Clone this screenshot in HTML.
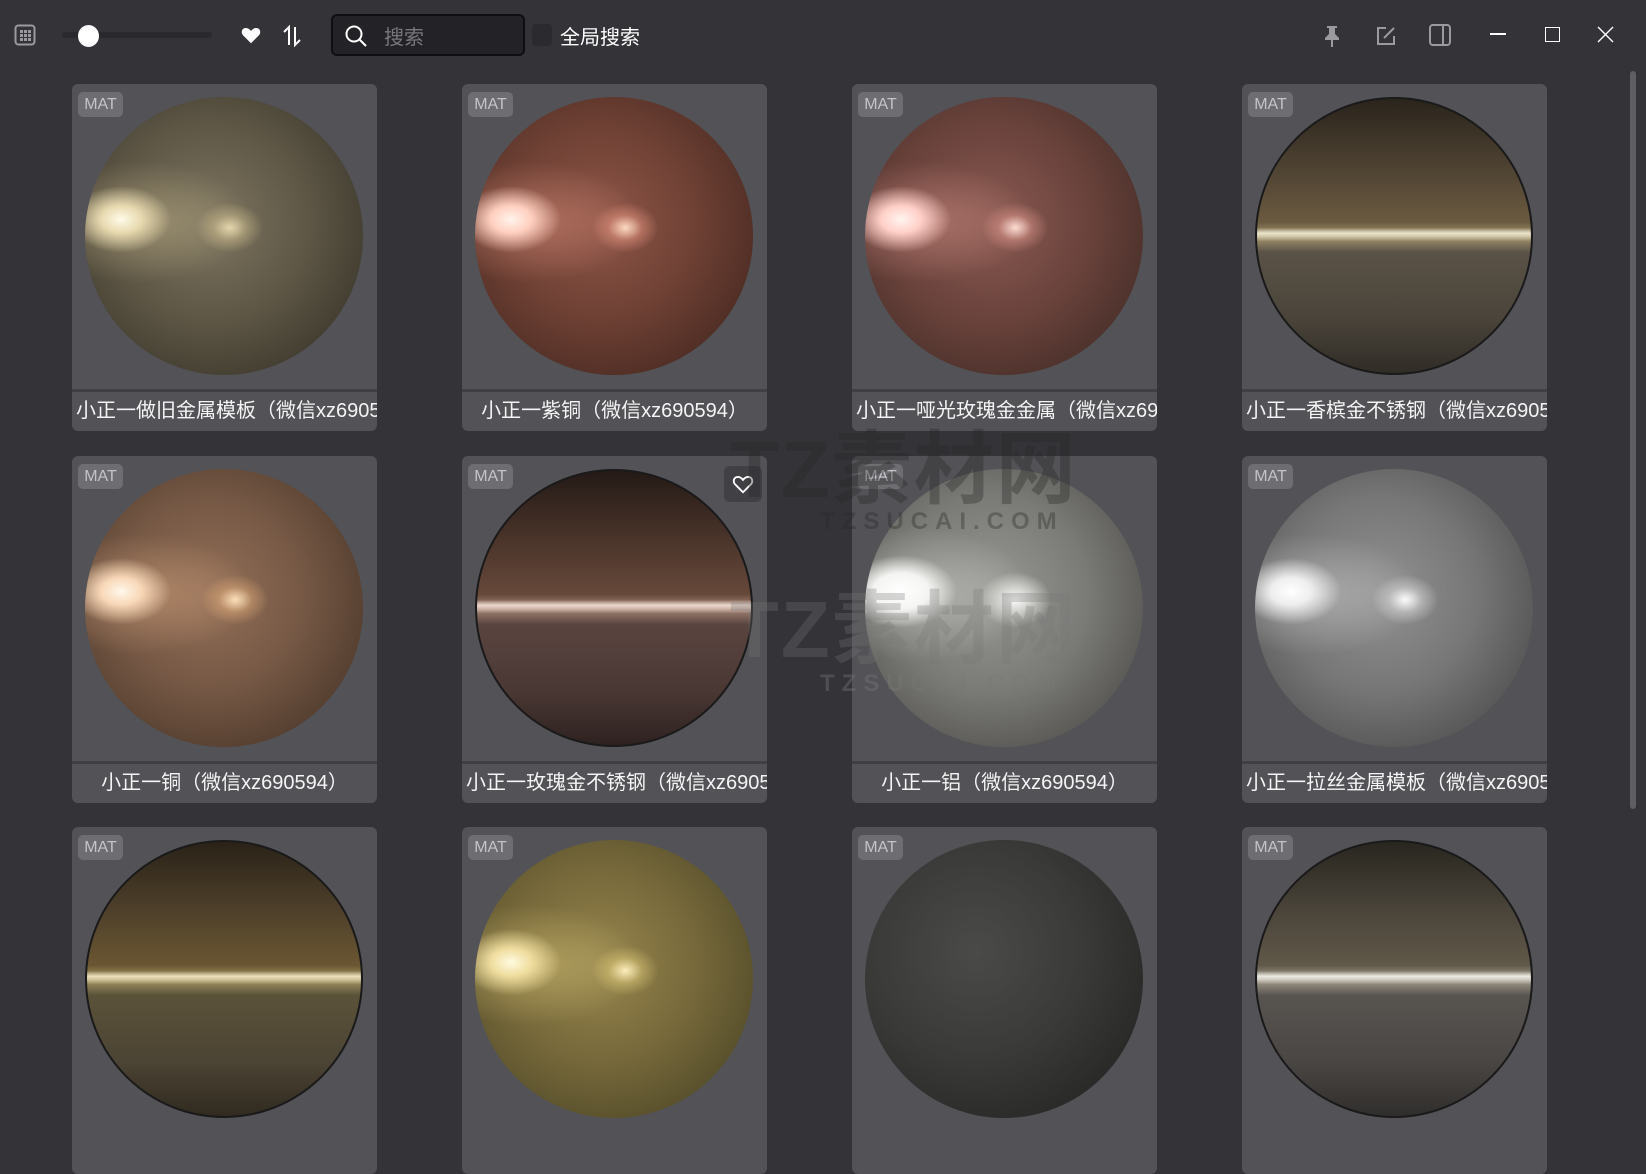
<!DOCTYPE html>
<html><head><meta charset="utf-8"><style>
*{margin:0;padding:0;box-sizing:border-box}
body{width:1646px;height:1121px;background:#333338;overflow:hidden;font-family:"Liberation Sans","Noto Sans CJK SC",sans-serif;position:relative;color:#fff}
.card{position:absolute;width:305px;height:347px;background:#525257;border-radius:6px;overflow:hidden}
.card .img{position:absolute;left:0;top:0;width:305px;height:305px}
.card .sep{position:absolute;left:0;top:305px;width:305px;height:3px;background:#3f3f44}
.card .lab{position:absolute;left:0;top:308px;width:305px;height:39px;line-height:38px;font-size:20px;white-space:nowrap;overflow:hidden;text-align:center;color:#f4f4f4}
.card .lab.l{text-align:left;padding-left:4px}
.badge{position:absolute;left:6px;top:8px;width:45px;height:25px;border-radius:5px;background:#6d6d72;color:#c4c4c8;font-size:16px;line-height:25px;text-align:center}
.sph{position:absolute;left:13px;top:13px;width:278px;height:278px;border-radius:50%}
.ic{position:absolute}
</style></head><body>
<svg class="ic" style="left:14px;top:24px" width="22" height="22" viewBox="0 0 22 22"><rect x="1.5" y="1.5" width="19" height="19" rx="3" fill="none" stroke="#9a9a9f" stroke-width="2"/><g fill="#9a9a9f"><rect x="6" y="6" width="3" height="3"/><rect x="10" y="6" width="3" height="3"/><rect x="14" y="6" width="3" height="3"/><rect x="6" y="10" width="3" height="3"/><rect x="10" y="10" width="3" height="3"/><rect x="14" y="10" width="3" height="3"/><rect x="6" y="14" width="3" height="3"/><rect x="10" y="14" width="3" height="3"/><rect x="14" y="14" width="3" height="3"/></g></svg>
<div style="position:absolute;left:62px;top:32px;width:150px;height:6px;border-radius:3px;background:#2a2a2e"></div>
<div style="position:absolute;left:78px;top:25px;width:21px;height:22px;border-radius:50%;background:#fff"></div>
<svg class="ic" style="left:240px;top:24px" width="22" height="22" viewBox="0 0 24 24"><path d="M12 21 3.5 12.5C1 10 1.5 5.5 5 4.5 7.5 3.8 10 5 12 7.5 14 5 16.5 3.8 19 4.5 22.5 5.5 23 10 20.5 12.5Z" fill="#fff"/></svg>
<svg class="ic" style="left:279px;top:23px" width="26" height="26" viewBox="0 0 26 26" fill="none" stroke="#fff" stroke-width="2"><path d="M10 22V4L5 9"/><path d="M16 4v18l5-5"/></svg>
<div style="position:absolute;left:331px;top:14px;width:194px;height:42px;border:2px solid #0f0f11;border-radius:6px;background:#232327"></div>
<svg class="ic" style="left:344px;top:24px" width="24" height="24" viewBox="0 0 24 24" fill="none" stroke="#fff" stroke-width="2"><circle cx="10" cy="10" r="7.5"/><path d="M15.5 15.5 22 22"/></svg>
<div style="position:absolute;left:384px;top:21px;font-size:20px;color:#77777c">搜索</div>
<div style="position:absolute;left:532px;top:24px;width:20px;height:22px;border-radius:4px;background:#2b2b2f"></div>
<div style="position:absolute;left:560px;top:21px;font-size:20px;color:#fff">全局搜索</div>
<svg class="ic" style="left:1320px;top:24px" width="24" height="24" viewBox="0 0 24 24" fill="#9a9a9f"><path d="M7 2h10v2h-2v6l4 4v2h-6v7h-2v-7H5v-2l4-4V4H7z"/></svg>
<svg class="ic" style="left:1374px;top:24px" width="24" height="24" viewBox="0 0 24 24" fill="none" stroke="#9a9a9f" stroke-width="2"><path d="M12 4H4v16h16v-8"/><path d="M10 14 20 4"/></svg>
<svg class="ic" style="left:1428px;top:23px" width="24" height="24" viewBox="0 0 24 24" fill="none" stroke="#9a9a9f" stroke-width="2"><rect x="2" y="2" width="20" height="20" rx="3"/><path d="M15 2v20"/></svg>
<div style="position:absolute;left:1490px;top:33px;width:16px;height:2px;background:#fff"></div>
<div style="position:absolute;left:1545px;top:27px;width:15px;height:15px;border:1.5px solid #fff"></div>
<svg class="ic" style="left:1597px;top:26px" width="17" height="17" viewBox="0 0 17 17" stroke="#fff" stroke-width="1.4"><path d="M1 1 16 16M16 1 1 16"/></svg>
<div style="position:absolute;left:1630px;top:71px;width:6px;height:738px;border-radius:3px;background:#5e5e63"></div>

<div class="card" style="left:72px;top:84px"><div class="img"><div class="sph" style="background:radial-gradient(ellipse 18% 12% at 13% 44%,#fffbe8 0,#e8dab0 40%,transparent 100%),radial-gradient(ellipse 40% 22% at 20% 45%,rgba(200,185,140,.5) 0,transparent 100%),radial-gradient(ellipse 12% 9% at 52% 47%,#e8d9b0 0,rgba(200,185,140,.5) 50%,transparent 100%),radial-gradient(circle at 45% 45%,#7e7560 0,#5e5746 45%,#433e31 75%,#2e2a21 100%)"></div><div class="badge">MAT</div></div><div class="sep"></div><div class="lab l">小正一做旧金属模板（微信xz690594）</div></div>
<div class="card" style="left:462px;top:84px"><div class="img"><div class="sph" style="background:radial-gradient(ellipse 18% 12% at 13% 44%,#fff4ec 0,#ffd0c0 40%,transparent 100%),radial-gradient(ellipse 40% 22% at 20% 45%,rgba(230,150,130,.5) 0,transparent 100%),radial-gradient(ellipse 12% 9% at 54% 47%,#ffe0c8 0,rgba(230,150,130,.5) 50%,transparent 100%),radial-gradient(circle at 45% 45%,#8e5648 0,#6e4034 45%,#502e25 75%,#3a201a 100%)"></div><div class="badge">MAT</div></div><div class="sep"></div><div class="lab">小正一紫铜（微信xz690594）</div></div>
<div class="card" style="left:852px;top:84px"><div class="img"><div class="sph" style="background:radial-gradient(ellipse 18% 12% at 13% 44%,#fff4f0 0,#ffd0c8 40%,transparent 100%),radial-gradient(ellipse 40% 22% at 20% 45%,rgba(220,150,140,.5) 0,transparent 100%),radial-gradient(ellipse 12% 9% at 54% 47%,#ffe2d8 0,rgba(220,150,140,.5) 50%,transparent 100%),radial-gradient(circle at 45% 45%,#8a5a52 0,#6a433c 45%,#4e322c 75%,#38231f 100%)"></div><div class="badge">MAT</div></div><div class="sep"></div><div class="lab l">小正一哑光玫瑰金金属（微信xz690594）</div></div>
<div class="card" style="left:1242px;top:84px"><div class="img"><div class="sph" style="border:2px solid #1a1a1a;background:linear-gradient(180deg,transparent 47%,rgba(255,250,230,.8) 49%,transparent 52%),linear-gradient(180deg,#2a241c 0,#4e4232 25%,#6a5a40 45%,#a89870 50%,#5a5246 56%,#4a443a 80%,#302c26 100%)"></div><div class="badge">MAT</div></div><div class="sep"></div><div class="lab l">小正一香槟金不锈钢（微信xz690594）</div></div>

<div class="card" style="left:72px;top:456px"><div class="img"><div class="sph" style="background:radial-gradient(ellipse 18% 12% at 13% 44%,#fff8ec 0,#f8d8b8 40%,transparent 100%),radial-gradient(ellipse 40% 22% at 20% 45%,rgba(220,170,130,.5) 0,transparent 100%),radial-gradient(ellipse 12% 9% at 54% 47%,#ffe4c0 0,rgba(220,170,120,.5) 50%,transparent 100%),radial-gradient(circle at 45% 45%,#947058 0,#745744 45%,#553f30 75%,#3e2e22 100%)"></div><div class="badge">MAT</div></div><div class="sep"></div><div class="lab">小正一铜（微信xz690594）</div></div>
<div class="card" style="left:462px;top:456px"><div class="img"><div class="sph" style="border:2px solid #1a1a1a;background:linear-gradient(180deg,transparent 47%,rgba(255,240,230,.8) 49%,transparent 52%),linear-gradient(180deg,#241a16 0,#4a342a 25%,#66483a 45%,#a88878 50%,#5a4440 56%,#4a3834 80%,#2e2220 100%)"></div><div class="badge">MAT</div><div style="position:absolute;left:262px;top:10px;width:38px;height:36px;border-radius:6px;background:#404045"></div><svg style="position:absolute;left:270px;top:17px" width="22" height="22" viewBox="0 0 24 24" fill="none" stroke="#fff" stroke-width="2"><path d="M12 21 3.5 12.5C1 10 1.5 5.5 5 4.5 7.5 3.8 10 5 12 7.5 14 5 16.5 3.8 19 4.5 22.5 5.5 23 10 20.5 12.5Z"/></svg></div><div class="sep"></div><div class="lab l">小正一玫瑰金不锈钢（微信xz690594）</div></div>
<div class="card" style="left:852px;top:456px"><div class="img"><div class="sph" style="background:radial-gradient(ellipse 20% 13% at 13% 44%,#ffffff 0,#f4f4f2 50%,transparent 100%),radial-gradient(ellipse 40% 24% at 20% 45%,rgba(220,220,215,.5) 0,transparent 100%),radial-gradient(ellipse 13% 10% at 54% 47%,#ffffff 0,rgba(230,230,225,.6) 55%,transparent 100%),radial-gradient(circle at 45% 45%,#989894 0,#7a7a76 45%,#5a5955 75%,#42413d 100%)"></div><div class="badge">MAT</div></div><div class="sep"></div><div class="lab">小正一铝（微信xz690594）</div></div>
<div class="card" style="left:1242px;top:456px"><div class="img"><div class="sph" style="background:radial-gradient(ellipse 18% 12% at 13% 44%,#ffffff 0,#eeeeee 40%,transparent 100%),radial-gradient(ellipse 40% 22% at 20% 45%,rgba(210,210,210,.5) 0,transparent 100%),radial-gradient(ellipse 12% 9% at 54% 47%,#ffffff 0,rgba(220,220,220,.5) 50%,transparent 100%),radial-gradient(circle at 45% 45%,#929292 0,#767676 45%,#575757 75%,#404040 100%)"></div><div class="badge">MAT</div></div><div class="sep"></div><div class="lab l">小正一拉丝金属模板（微信xz690594）</div></div>

<div class="card" style="left:72px;top:827px"><div class="img"><div class="sph" style="border:2px solid #1a1a1a;background:linear-gradient(180deg,transparent 47%,rgba(255,245,210,.8) 49%,transparent 52%),linear-gradient(180deg,#2a2218 0,#4e402a 25%,#6a5632 45%,#a89868 50%,#5a5238 56%,#4c4434 80%,#302a20 100%)"></div><div class="badge">MAT</div></div></div>
<div class="card" style="left:462px;top:827px"><div class="img"><div class="sph" style="background:radial-gradient(ellipse 18% 12% at 13% 44%,#fffbe0 0,#f0dea0 40%,transparent 100%),radial-gradient(ellipse 40% 22% at 20% 45%,rgba(220,200,120,.5) 0,transparent 100%),radial-gradient(ellipse 12% 9% at 54% 47%,#fff0c0 0,rgba(220,200,120,.5) 50%,transparent 100%),radial-gradient(circle at 45% 45%,#96864e 0,#76683a 45%,#58502c 75%,#403a20 100%)"></div><div class="badge">MAT</div></div></div>
<div class="card" style="left:852px;top:827px"><div class="img"><div class="sph" style="background:radial-gradient(circle at 40% 40%,#4a4a48 0,#3a3a38 45%,#2a2a28 75%,#1e1e1c 100%)"></div><div class="badge">MAT</div></div></div>
<div class="card" style="left:1242px;top:827px"><div class="img"><div class="sph" style="border:2px solid #1a1a1a;background:linear-gradient(180deg,transparent 47%,rgba(255,255,250,.8) 49%,transparent 52%),linear-gradient(180deg,#28261f 0,#4a443a 25%,#605848 45%,#a8a090 50%,#585450 56%,#4a4644 80%,#302e2c 100%)"></div><div class="badge">MAT</div></div></div>

<div style="position:absolute;left:730px;top:405px;font-size:80px;font-weight:bold;color:rgba(40,40,40,.35);letter-spacing:2px">TZ素材网</div>
<div style="position:absolute;left:820px;top:508px;font-size:24px;font-weight:bold;color:rgba(40,40,40,.35);letter-spacing:7px">TZSUCAI.COM</div>
<div style="position:absolute;left:730px;top:565px;font-size:80px;font-weight:bold;color:rgba(120,120,120,.3);letter-spacing:2px">TZ素材网</div>
<div style="position:absolute;left:820px;top:670px;font-size:24px;font-weight:bold;color:rgba(120,120,120,.4);letter-spacing:7px">TZSUCAI.COM</div>
</body></html>
